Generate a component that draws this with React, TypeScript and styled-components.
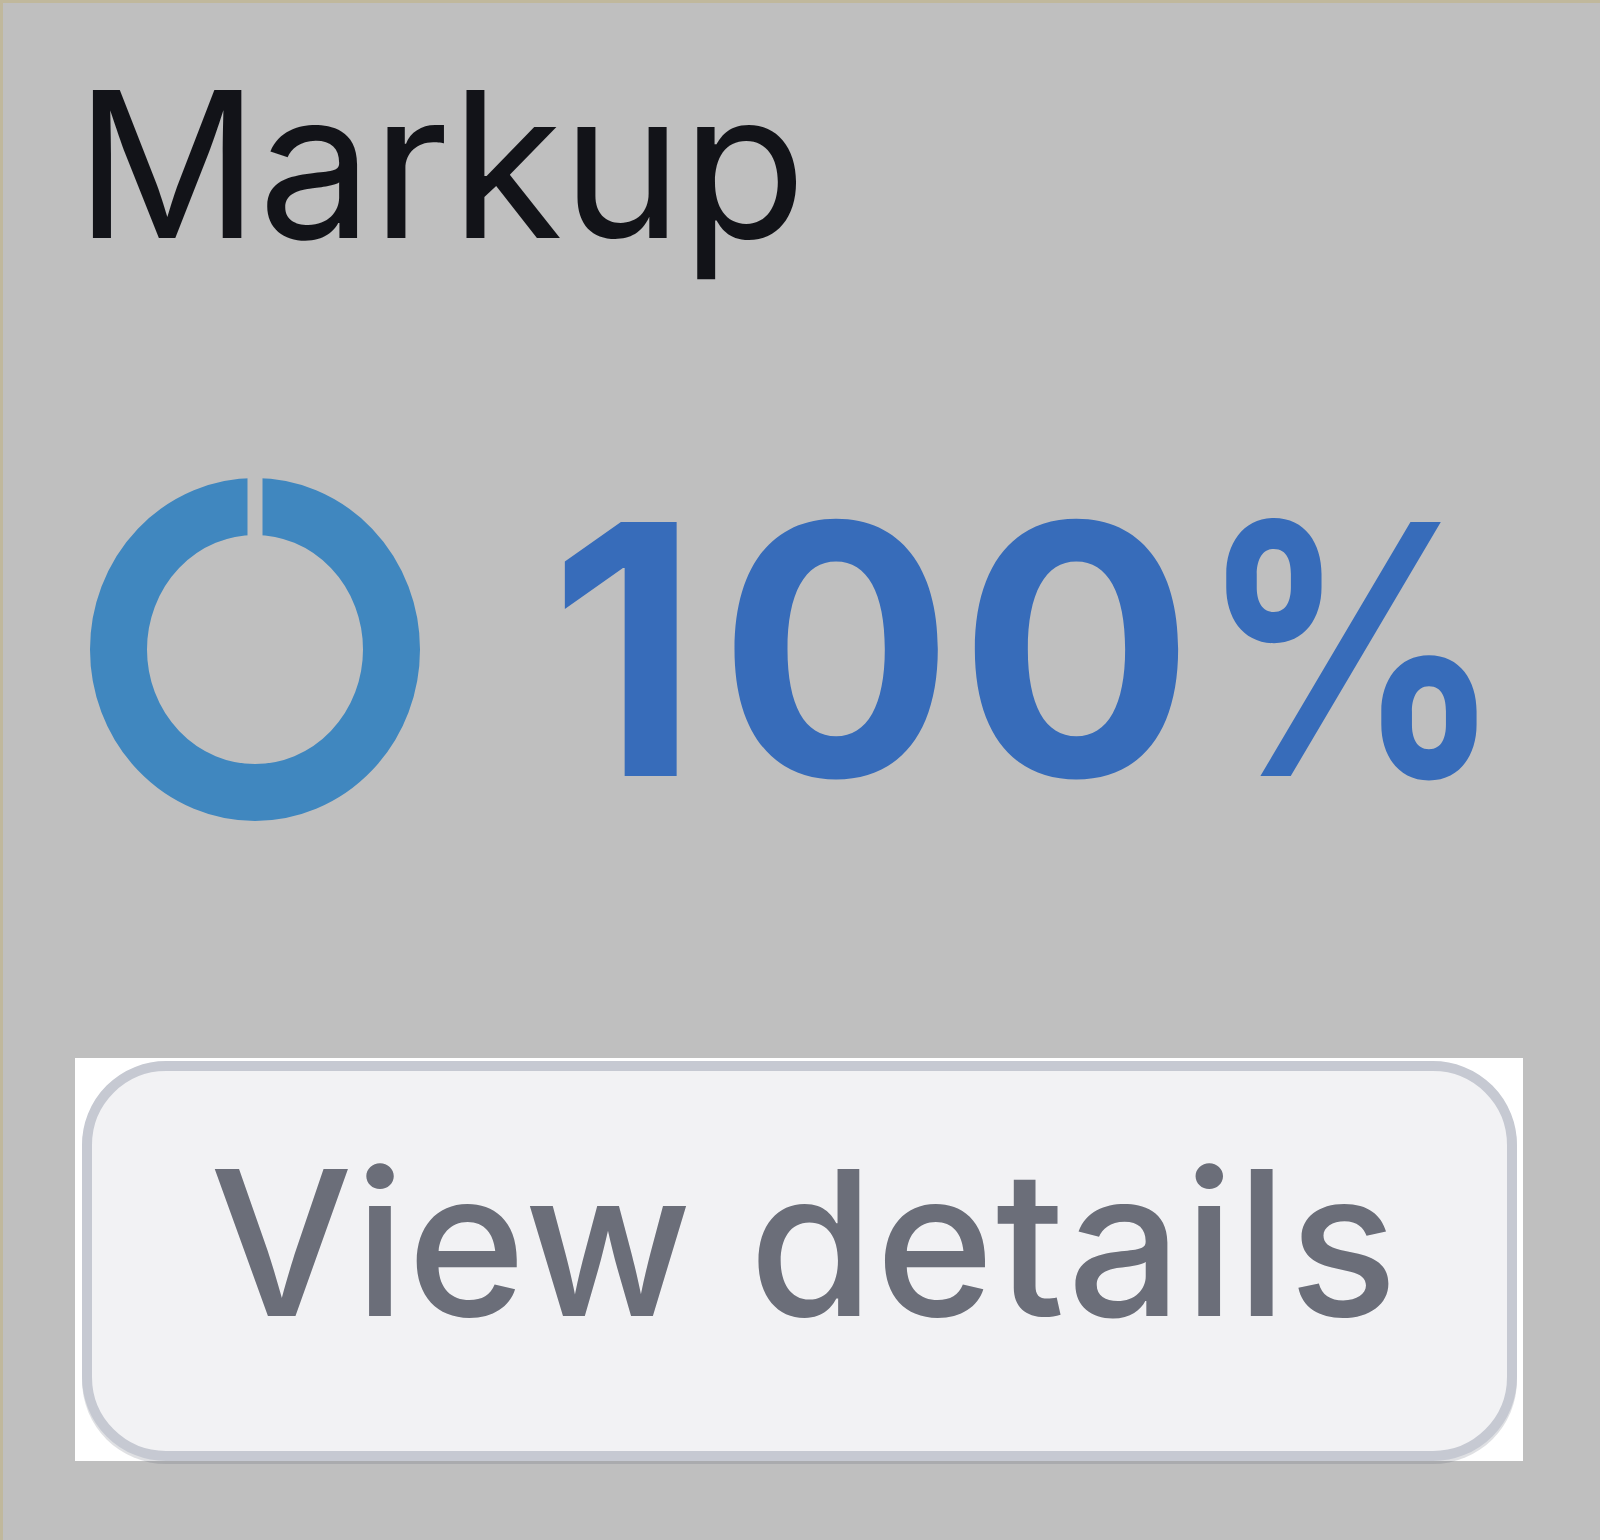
import React from "react";
import styled, { createGlobalStyle } from "styled-components";

const Global = createGlobalStyle`
  html, body {
    margin: 0;
    padding: 0;
    background: #c0b89c;
  }
  body {
    font-family: Inter, "Noto Sans", "Liberation Sans", sans-serif;
  }
`;

const Card = styled.section`
  margin: 3px 0 0 3px;
  min-height: 1537px;
  background: #bfbfbf;
  box-sizing: border-box;
  padding: 59px 0 0 72px;
  display: flex;
  flex-direction: column;
  align-items: flex-start;
`;

const Title = styled.h2`
  margin: 0;
  font-family: Inter, "Liberation Sans", sans-serif;
  font-weight: 400;
  font-size: 204px;
  line-height: 1;
  color: #121318;
  letter-spacing: -1px;
`;

const StatRow = styled.div`
  margin-top: 209px;
  display: flex;
  align-items: center;
  gap: 129px;
  padding-left: 15px;
`;

const Value = styled.div`
  font-family: Inter, "Liberation Sans", sans-serif;
  font-weight: 700;
  font-size: 349px;
  line-height: 1;
  color: #376cba;
  letter-spacing: 5px;
  white-space: nowrap;
`;

const Digit = styled.span<{ $extra: number }>`
  margin-right: ${(p) => p.$extra}px;
`;

const Percent = styled.span`
  display: inline-block;
  transform: scaleX(0.86);
  transform-origin: left center;
  letter-spacing: 0;
`;

const ButtonFrame = styled.div`
  margin-top: 234px;
  width: 1448px;
  height: 403px;
  background: #ffffff;
  box-sizing: border-box;
  padding: 3px 6px 0 7px;
  display: flex;
`;

const DetailsButton = styled.button`
  flex: 1;
  height: 400px;
  box-sizing: border-box;
  border: 10px solid #c6c9d2;
  border-radius: 84px;
  background: #f2f2f4;
  box-shadow: 0 3px 0 rgba(80, 84, 100, 0.18);
  color: #6b6e79;
  font-family: Inter, "Liberation Sans", sans-serif;
  font-weight: 500;
  font-size: 202px;
  line-height: 1;
  letter-spacing: 1.7px;
  padding: 0 0 36px 10px;
  cursor: pointer;
  display: flex;
  align-items: center;
  justify-content: center;
`;

function Donut() {
  return (
    <svg width="330" height="343" viewBox="0 0 330 343" aria-hidden="true">
      <defs>
        <mask
          id="gapMask"
          maskUnits="userSpaceOnUse"
          x="0"
          y="0"
          width="330"
          height="343"
        >
          <rect x="0" y="0" width="330" height="343" fill="#fff" />
          <rect x="157.5" y="0" width="15" height="80" fill="#000" />
        </mask>
      </defs>
      <ellipse
        cx="165"
        cy="171.5"
        rx="136.5"
        ry="143"
        fill="none"
        stroke="#4087bf"
        strokeWidth="57"
        mask="url(#gapMask)"
      />
    </svg>
  );
}

export default function App() {
  return (
    <>
      <Global />
      <Card>
        <Title>Markup</Title>
        <StatRow>
          <Donut />
          <Value>
            <Digit $extra={14}>1</Digit>00<Percent>%</Percent>
          </Value>
        </StatRow>
        <ButtonFrame>
          <DetailsButton type="button">View details</DetailsButton>
        </ButtonFrame>
      </Card>
    </>
  );
}
